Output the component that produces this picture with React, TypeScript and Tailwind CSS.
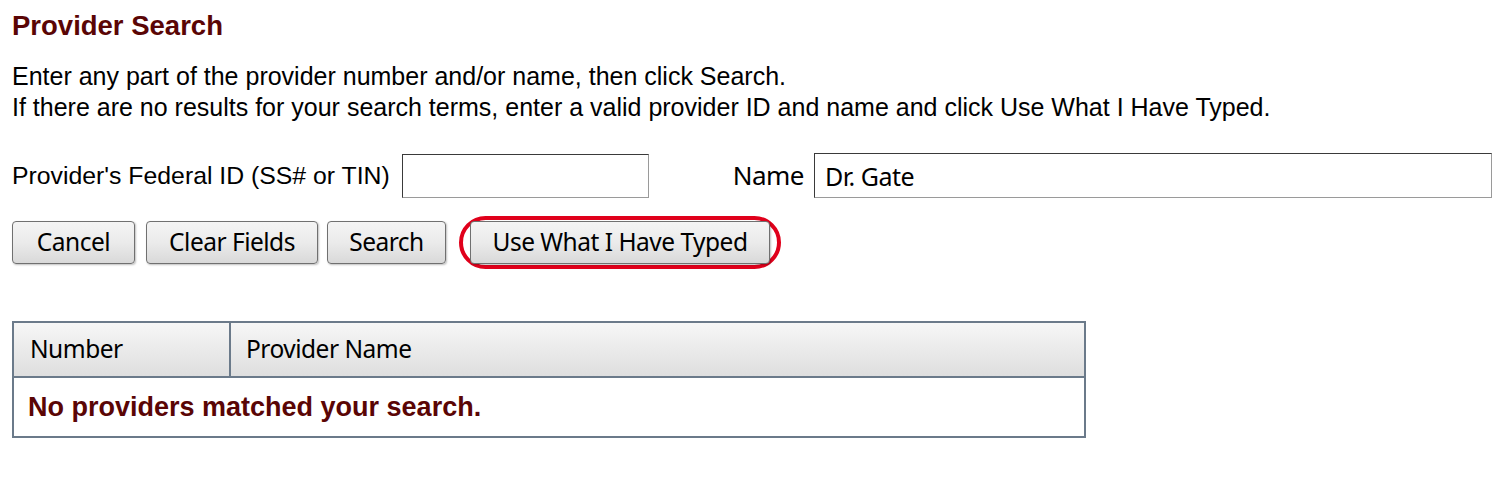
const arial = { fontFamily: '"Liberation Sans", Arial, sans-serif' };

function Btn({ children, w }: { children: React.ReactNode; w: string }) {
  return (
    <button
      className={`${w} h-[43px] rounded-[4px] border border-[#707070] bg-gradient-to-b from-[#f4f4f4] via-[#ebebeb] to-[#d9d9d9] text-[24.5px] text-black shadow-[1px_1px_2px_rgba(0,0,0,0.25)] font-['Noto_Sans',sans-serif] tracking-[-0.5px]`}
    >
      {children}
    </button>
  );
}

export default function App() {
  return (
    <div className="w-[1500px] h-[500px] bg-white pl-[12px] pt-[9px] text-black" style={arial}>
      <h1 className="text-[27.5px] font-bold text-[#5a0505] leading-[34px]">Provider Search</h1>

      <div className="mt-[18px] text-[25px] leading-[31px]">
        <p>Enter any part of the provider number and/or name, then click Search.</p>
        <p>If there are no results for your search terms, enter a valid provider ID and name and click Use What I Have Typed.</p>
      </div>

      <div className="mt-[30px] flex items-center">
        <label className="text-[24.8px]">Provider&apos;s Federal ID (SS# or TIN)</label>
        <input
          className="ml-[12px] w-[247px] h-[44px] border border-[#9a9a9a] border-t-[#3a3a3a] border-l-[#3a3a3a] outline-none"
          defaultValue=""
        />
        <label className="ml-[84px] text-[26px] font-['Noto_Sans',sans-serif] tracking-[-0.5px]">Name</label>
        <input
          className="ml-[10px] w-[678px] h-[45px] border border-[#9a9a9a] border-t-[#3a3a3a] border-l-[#3a3a3a] outline-none px-[10px] text-[25px] font-['Noto_Sans',sans-serif] tracking-[-0.5px]"
          defaultValue="Dr. Gate"
        />
      </div>

      <div className="mt-[18px] flex items-center">
        <Btn w="w-[123px]">Cancel</Btn>
        <div className="ml-[11px]">
          <Btn w="w-[172px]">Clear Fields</Btn>
        </div>
        <div className="ml-[9px]">
          <Btn w="w-[119px]">Search</Btn>
        </div>
        <div className="ml-[13px] rounded-full border-[4px] border-[#e0001b] px-[7px] py-[1px]">
          <Btn w="w-[300px]">Use What I Have Typed</Btn>
        </div>
      </div>

      <table className="mt-[52px] w-[1074px] border-collapse border-2 border-[#6b7a8a]">
        <thead>
          <tr className="h-[55px] bg-gradient-to-b from-[#f7f7f7] to-[#dedede]">
            <th className="w-[217px] border-r-2 border-[#6b7a8a] text-left pl-[16px] font-normal text-[24.5px] font-['Noto_Sans',sans-serif] tracking-[-0.5px]">
              Number
            </th>
            <th className="text-left pl-[15px] font-normal text-[24.5px] font-['Noto_Sans',sans-serif] tracking-[-0.5px]">
              Provider Name
            </th>
          </tr>
        </thead>
        <tbody>
          <tr className="h-[60px] border-t-2 border-[#6b7a8a]">
            <td colSpan={2} className="pl-[14px] text-[27px] font-bold text-[#5a0505]">
              No providers matched your search.
            </td>
          </tr>
        </tbody>
      </table>
    </div>
  );
}
